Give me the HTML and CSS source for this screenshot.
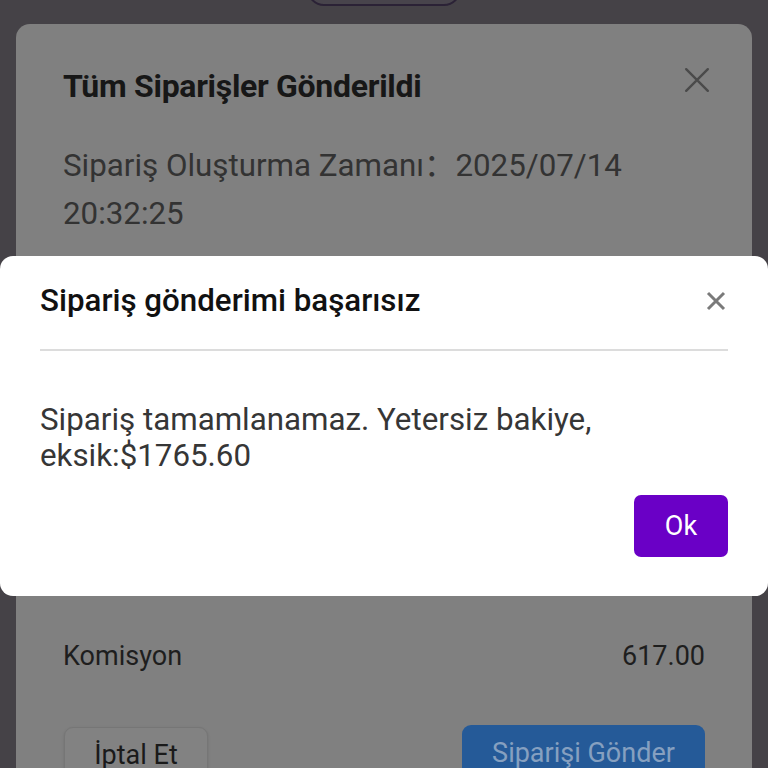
FILE: index.html
```html
<!DOCTYPE html>
<html lang="tr">
<head>
<meta charset="utf-8">
<link rel="stylesheet" href="styles.css">
</head>
<body>
<div class="page">
  <div class="pill"></div>
  <div class="card">
    <div class="card-head">
      <h2 class="card-title">Tüm Siparişler Gönderildi</h2>
      <svg class="card-close" viewBox="0 0 24 24" width="26" height="26"><path d="M2 2 L22 22 M22 2 L2 22" stroke="#4a4a4a" stroke-width="2.2" stroke-linecap="round" fill="none"/></svg>
    </div>
    <p class="card-time">Sipariş Oluşturma Zamanı<span class="cjk-colon">：</span>2025/07/14 20:32:25</p>
    <div class="card-hidden">
      <div class="row"><span>Sipariş Tutarı</span><span>0.00</span></div>
      <div class="row"><span>Sipariş Sayısı</span><span>1</span></div>
      <div class="row"><span>Toplam</span><span>0.00</span></div>
    </div>
    <div class="row row-fee"><span>Komisyon</span><span>617.00</span></div>
    <div class="actions">
      <button class="btn-cancel">İptal Et</button>
      <button class="btn-submit">Siparişi Gönder</button>
    </div>
  </div>

  <div class="modal">
    <div class="modal-head">
      <h3 class="modal-title">Sipariş gönderimi başarısız</h3>
      <svg class="modal-close" viewBox="0 0 20 20" width="20" height="20"><path d="M2 2 L18 18 M18 2 L2 18" stroke="#7a7a7a" stroke-width="3" fill="none"/></svg>
    </div>
    <p class="modal-body">Sipariş tamamlanamaz. Yetersiz bakiye, eksik:$1765.60</p>
    <div class="modal-foot">
      <button class="btn-ok">Ok</button>
    </div>
  </div>
</div>
</body>
</html>
```
FILE: styles.css
```css
* { box-sizing: border-box; }
html, body { margin: 0; padding: 0; }
body {
  font-family: Roboto, "Noto Sans", "Liberation Sans", sans-serif;
  background: #434045;
}
.page {
  position: relative;
  width: 768px;
  height: 768px;
  overflow: hidden;
  background: #454247;
  display: flex;
  flex-direction: column;
}
.pill {
  align-self: center;
  width: 154px;
  height: 34px;
  margin-top: -28px;
  border: 2px solid #2b2236;
  border-radius: 17px;
  background: #48444c;
  flex-shrink: 0;
}
.card {
  margin: 18px 16px 0;
  background: #808080;
  border-radius: 14px;
  padding: 42px 47px 0;
  flex: 1;
}
.card-head {
  display: flex;
  justify-content: space-between;
  align-items: flex-start;
}
.card-title {
  margin: 0;
  font-size: 32px;
  font-weight: 700;
  color: #171717;
  line-height: 40px;
  letter-spacing: -0.3px;
}
.card-close { margin-top: 1px; margin-right: -5px; }
.card-time {
  margin: 36px 0 0;
  font-size: 31.3px;
  line-height: 48px;
  color: #333;
  width: 580px;
}
.cjk-colon {
  font-family: "Noto Sans CJK SC", "Noto Sans CJK JP", sans-serif;
  line-height: 0;
}
.card-hidden { height: 401px; visibility: hidden; }
.card-hidden .row { height: 110px; }
.row {
  display: flex;
  justify-content: space-between;
  font-size: 27px;
  line-height: 34px;
  color: #1e1e1e;
}
.actions {
  display: flex;
  justify-content: space-between;
  align-items: flex-start;
  margin-top: 52px;
}
.actions button {
  font-family: inherit;
  font-size: 27px;
  height: 56px;
  border-radius: 9px;
  cursor: pointer;
}
.btn-cancel {
  width: 144px;
  margin-top: 2px;
  margin-left: 1px;
  background: #828282;
  border: 1.5px solid #767676;
  color: #1a1a1a;
  box-shadow: 0 1px 3px rgba(0,0,0,0.12);
}
.btn-submit {
  width: 243px;
  background: #255a98;
  border: none;
  color: #86a0c0;
}
.modal {
  position: absolute;
  left: 0;
  right: 0;
  top: 256px;
  height: 340px;
  background: #fff;
  border-radius: 13px;
  padding: 24px 40px 0;
}
.modal-head {
  display: flex;
  justify-content: space-between;
  align-items: center;
  padding-bottom: 27px;
  border-bottom: 2px solid #dcdcdc;
}
.modal-title {
  margin: 0;
  font-size: 31.3px;
  font-weight: 500;
  color: #111;
  line-height: 42px;
}
.modal-close { margin-right: 2px; }
.modal-body {
  margin: 51px 0 0;
  font-size: 31.3px;
  line-height: 36px;
  color: #363636;
  width: 580px;
}
.modal-foot {
  display: flex;
  justify-content: flex-end;
  margin-top: 21px;
}
.btn-ok {
  width: 94px;
  height: 62px;
  background: #6a00c6;
  color: #fff;
  border: none;
  border-radius: 7px;
  font-family: inherit;
  font-size: 27px;
}
```
